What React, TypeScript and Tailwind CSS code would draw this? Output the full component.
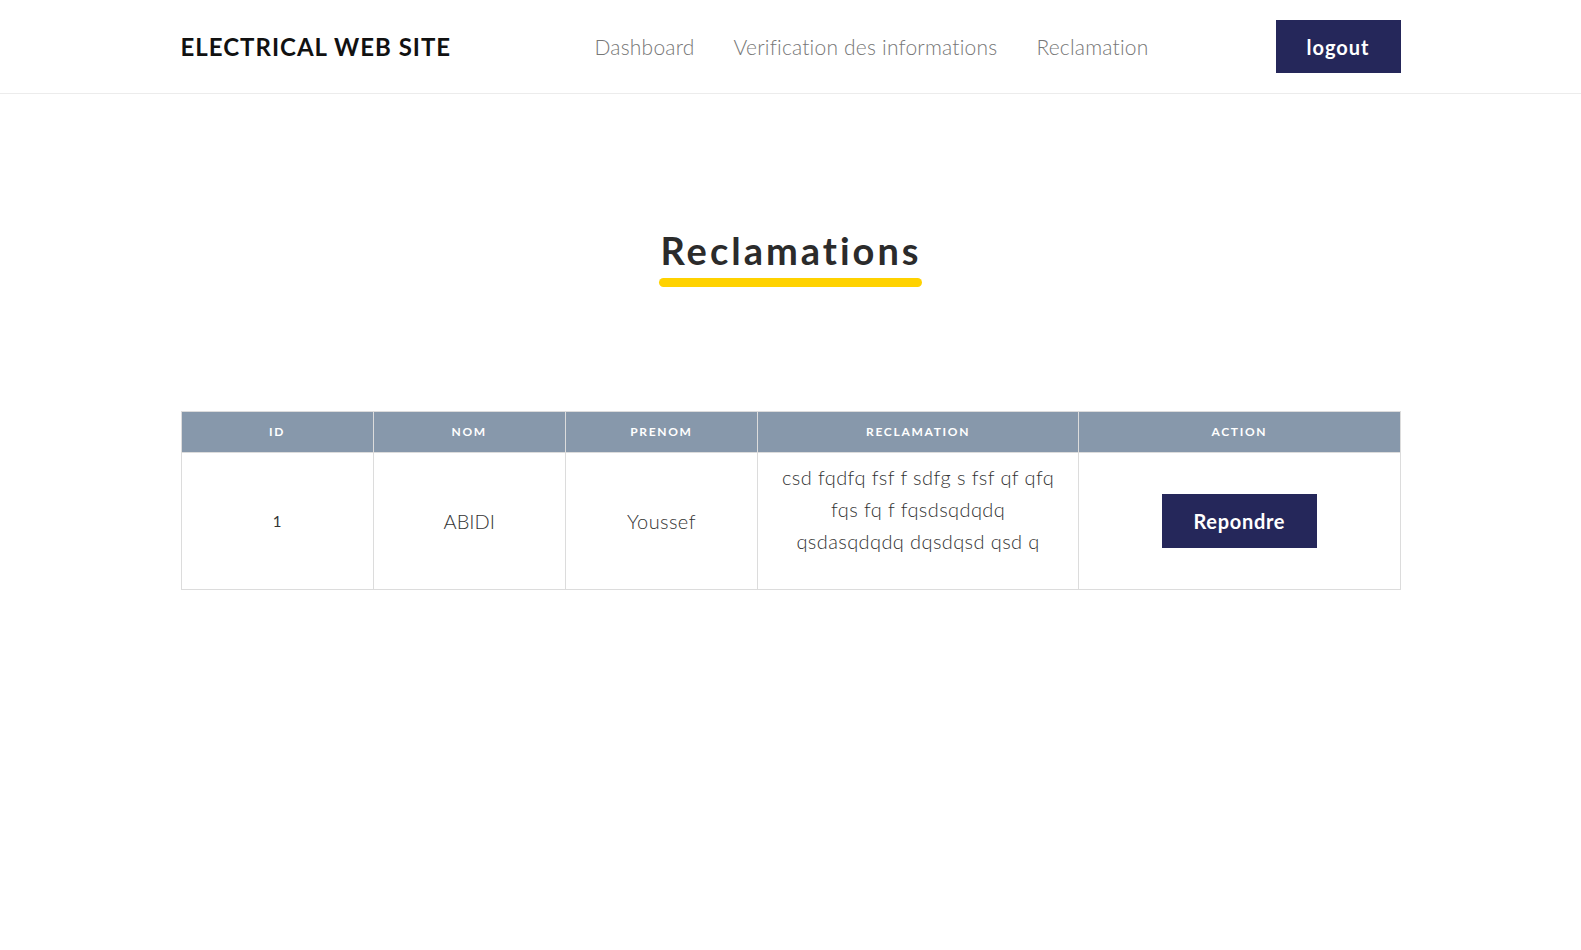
import React from "react";

const font = { fontFamily: "Lato, 'Open Sans', sans-serif" };

export default function App() {
  return (
    <div className="min-h-[950px] bg-white text-[#333]" style={font}>
      <header className="h-[94px] border-b border-[#ececec]">
        <div className="w-[1220px] mx-auto h-full flex items-center">
          <div className="w-[414px] text-[24px] font-bold text-[#111] tracking-[1px]">
            ELECTRICAL WEB SITE
          </div>
          <nav className="flex items-center gap-[39px] text-[21px] font-light text-[#777] tracking-[0.2px]">
            <a>Dashboard</a>
            <a>Verification des informations</a>
            <a>Reclamation</a>
          </nav>
          <button className="ml-auto w-[125px] h-[53px] bg-[#25275a] text-white text-[20px] font-bold tracking-[1px]">
            logout
          </button>
        </div>
      </header>

      <section className="pt-[132px] flex justify-center">
        <div className="inline-flex flex-col items-stretch">
          <h1 className="text-[38px] leading-[48px] font-bold text-[#2b2b2b] tracking-[3px] pl-[1px]">
            Reclamations
          </h1>
          <div className="mt-[4px] h-[9px] rounded-full bg-[#ffd200]" />
        </div>
      </section>

      <section className="w-[1220px] mx-auto mt-[124px]">
        <table className="w-full border-collapse table-fixed">
          <colgroup>
            <col className="w-[192px]" />
            <col className="w-[192px]" />
            <col className="w-[192px]" />
            <col className="w-[321px]" />
            <col className="w-[321px]" />
          </colgroup>
          <thead>
            <tr className="bg-[#8798ab] text-white text-[12px] font-bold tracking-[1.7px] h-[41px]">
              <th className="border border-[#dcdcdc]">ID</th>
              <th className="border border-[#dcdcdc]">NOM</th>
              <th className="border border-[#dcdcdc]">PRENOM</th>
              <th className="border border-[#dcdcdc]">RECLAMATION</th>
              <th className="border border-[#dcdcdc]">ACTION</th>
            </tr>
          </thead>
          <tbody>
            <tr className="h-[137px] text-center">
              <td className="border border-[#dcdcdc] text-[15px]">1</td>
              <td className="border border-[#dcdcdc] text-[20px] font-light">ABIDI</td>
              <td className="border border-[#dcdcdc] text-[20px] font-light tracking-[0.4px]">Youssef</td>
              <td className="border border-[#dcdcdc] text-[20px] font-light leading-[32px] tracking-[0.4px] px-[20px] pb-[24px]">
                csd fqdfq fsf f sdfg s fsf qf qfq fqs fq f fqsdsqdqdq qsdasqdqdq dqsdqsd qsd q
              </td>
              <td className="border border-[#dcdcdc]">
                <button className="w-[155px] h-[54px] bg-[#25275a] text-white text-[20px] font-bold tracking-[0.7px]">
                  Repondre
                </button>
              </td>
            </tr>
          </tbody>
        </table>
      </section>
    </div>
  );
}
